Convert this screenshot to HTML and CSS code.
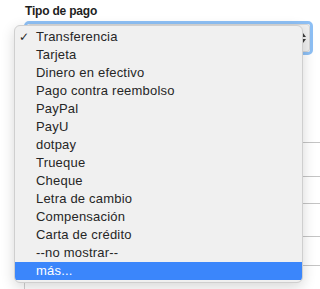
FILE: index.html
```html
<!DOCTYPE html>
<html>
<head>
  <meta charset="utf-8">
  <meta name="viewport" content="width=device-width">
  <title>Tipo de pago</title>
  <link rel="stylesheet" href="styles.css">
</head>
<body>
  <section class="form">
    <label class="fieldLabel">Tipo de pago</label>
    <div class="selectBox">
      <div class="selectInner">
        <svg class="arrows" width="8" height="12" viewBox="0 0 8 12">
          <path d="M4 1 L7 5 L1 5 Z" fill="#3a3a3a"/>
          <path d="M4 11 L7 7 L1 7 Z" fill="#3a3a3a"/>
        </svg>
      </div>
    </div>
    <div class="rows">
      <div class="row row_1"></div>
      <div class="row row_2"></div>
      <div class="row row_3"></div>
      <div class="row row_4"></div>
      <div class="row row_5"></div>
    </div>
  </section>

  <ul class="menu">
    <li class="item checked">Transferencia</li>
    <li class="item">Tarjeta</li>
    <li class="item">Dinero en efectivo</li>
    <li class="item">Pago contra reembolso</li>
    <li class="item">PayPal</li>
    <li class="item">PayU</li>
    <li class="item">dotpay</li>
    <li class="item">Trueque</li>
    <li class="item">Cheque</li>
    <li class="item">Letra de cambio</li>
    <li class="item">Compensación</li>
    <li class="item">Carta de crédito</li>
    <li class="item">--no mostrar--</li>
    <li class="item active">más...</li>
  </ul>
</body>
</html>
```

FILE: styles.css
```css
html, body {
  margin: 0;
  padding: 0;
  overflow: hidden;
}

body {
  width: 320px;
  height: 289px;
  background-color: #ffffff;
  font-family: "Liberation Sans", Arial, sans-serif;
  position: relative;
}

.form {
  box-sizing: border-box;
  display: flex;
  flex-direction: column;
  padding: 4px 0 0 24px;
}

.fieldLabel {
  font-size: 12px;
  font-weight: 700;
  color: #1e1e1e;
  line-height: 14px;
  padding-left: 1px;
  letter-spacing: -0.2px;
}

.selectBox {
  box-sizing: border-box;
  margin-top: 3px;
  width: 289px;
  height: 34px;
  border-radius: 5px;
  border: 3px solid #8ec0f5;
  background-color: #ffffff;
}

.selectInner {
  box-sizing: border-box;
  height: 100%;
  border-radius: 3px;
  background-color: #f0f0f0;
  border: 1px solid #d6d6d6;
  display: flex;
  justify-content: flex-end;
  align-items: center;
  padding-right: 2px;
}

.rows {
  display: flex;
  flex-direction: column;
  border-left: 1px solid #d0d0d0;
  height: 234px;
}

.row {
  border-bottom: 1px solid #c4c4c4;
}
.row_1 {
  height: 87px;
}
.row_2 {
  height: 33px;
}
.row_3 {
  height: 26px;
}
.row_4 {
  height: 32px;
}
.row_5 {
  height: 28px;
}

.menu {
  position: absolute;
  top: 25px;
  left: 14px;
  box-sizing: border-box;
  width: 289px;
  margin: 0;
  padding: 2px 0 2px 0;
  list-style: none;
  background-color: #f0f0f0;
  border: 1px solid #cfcfcf;
  border-radius: 6px;
  box-shadow: 0 4px 14px rgba(0, 0, 0, 0.16);
  overflow: hidden;
}

.item {
  height: 18px;
  line-height: 18px;
  padding-left: 21px;
  font-size: 13px;
  letter-spacing: 0.2px;
  color: #262626;
  position: relative;
}

.checked::before {
  content: "\2713";
  position: absolute;
  left: 4px;
  top: 0;
  font-family: "DejaVu Sans", sans-serif;
  font-size: 12px;
  color: #262626;
}

.active {
  background-color: #3b86fb;
  color: #ffffff;
}
```
